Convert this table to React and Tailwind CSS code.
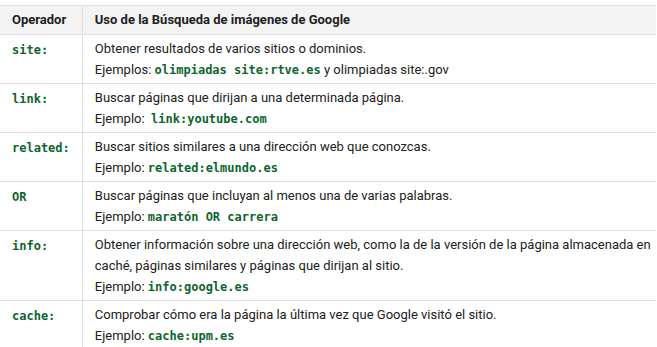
const rows = [
  {
    op: "site:",
    lines: [
      ["Obtener resultados de varios sitios o dominios."],
      ["Ejemplos: ", { code: "olimpiadas site:rtve.es" }, " y olimpiadas site:.gov"],
    ],
  },
  {
    op: "link:",
    lines: [
      ["Buscar páginas que dirijan a una determinada página."],
      ["Ejemplo:  ", { code: "link:youtube.com" }],
    ],
  },
  {
    op: "related:",
    lines: [
      ["Buscar sitios similares a una dirección web que conozcas."],
      ["Ejemplo: ", { code: "related:elmundo.es" }],
    ],
  },
  {
    op: "OR",
    lines: [
      ["Buscar páginas que incluyan al menos una de varias palabras."],
      ["Ejemplo: ", { code: "maratón OR carrera" }],
    ],
  },
  {
    op: "info:",
    lines: [
      [
        "Obtener información sobre una dirección web, como la de la versión de la página almacenada en caché, páginas similares y páginas que dirijan al sitio.",
      ],
      ["Ejemplo: ", { code: "info:google.es" }],
    ],
  },
  {
    op: "cache:",
    lines: [
      ["Comprobar cómo era la página la última vez que Google visitó el sitio."],
      ["Ejemplo: ", { code: "cache:upm.es" }],
    ],
  },
];

const Code = ({ children }) => (
  <code className="font-['DejaVu_Sans_Mono',monospace] text-[12px] leading-[0] font-bold text-[#0d652d] whitespace-pre">
    {children}
  </code>
);

export default function App() {
  return (
    <div className="bg-white pt-[5px] h-[347px] overflow-hidden font-['Roboto',sans-serif] text-[13px] text-[#212121]">
      <table className="w-[656px] border-collapse">
        <thead>
          <tr className="bg-[#f3f3f3] border-y border-[#e0e0e0]">
            <th className="w-[82px] border-r border-[#e0e0e0] px-3 h-[29px] text-left font-bold">
              Operador
            </th>
            <th className="pl-3 pr-1 text-left font-bold">
              Uso de la Búsqueda de imágenes de Google
            </th>
          </tr>
        </thead>
        <tbody>
          {rows.map((r) => (
            <tr key={r.op} className="border-b border-[#e0e0e0]">
              <td className="border-r border-[#e0e0e0] px-3 pt-[4px] align-top leading-[21px]">
                <Code>{r.op}</Code>
              </td>
              <td className="pl-3 pr-1 py-[3px] leading-[21px] align-top">
                {r.lines.map((line, i) => (
                  <div key={i} className="whitespace-pre-wrap">
                    {line.map((part, j) =>
                      typeof part === "string" ? (
                        <span key={j}>{part}</span>
                      ) : (
                        <Code key={j}>{part.code}</Code>
                      )
                    )}
                  </div>
                ))}
              </td>
            </tr>
          ))}
        </tbody>
      </table>
    </div>
  );
}
